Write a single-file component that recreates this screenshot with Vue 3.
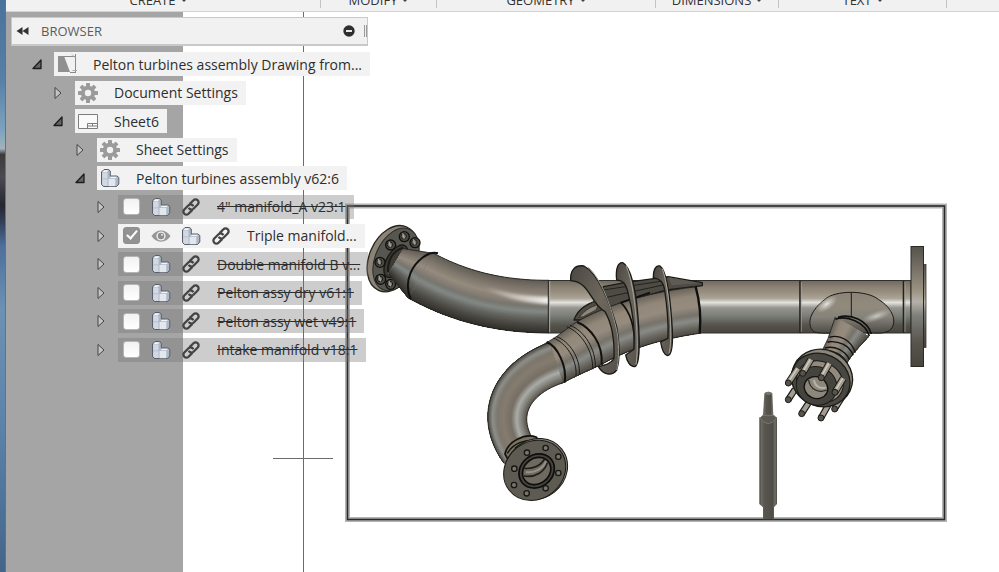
<script setup>
import { reactive } from 'vue'

const menus = ['CREATE', 'MODIFY', 'GEOMETRY', 'DIMENSIONS', 'TEXT']

const rows = reactive([
  { level: 0, open: true, icons: ['drawing'], label: 'Pelton turbines assembly Drawing from...' },
  { level: 1, open: false, icons: ['gear'], label: 'Document Settings' },
  { level: 1, open: true, icons: ['sheet'], label: 'Sheet6' },
  { level: 2, open: false, icons: ['gear'], label: 'Sheet Settings' },
  { level: 2, open: true, icons: ['part'], label: 'Pelton turbines assembly v62:6' },
  { level: 3, open: false, check: true, shown: false, icons: ['part', 'chain'], label: '4" manifold_A v23:1' },
  { level: 3, open: false, check: true, shown: true, icons: ['eye', 'part', 'chain'], label: 'Triple manifold...' },
  { level: 3, open: false, check: true, shown: false, icons: ['part', 'chain'], label: 'Double manifold B v...' },
  { level: 3, open: false, check: true, shown: false, icons: ['part', 'chain'], label: 'Pelton assy dry v61:1' },
  { level: 3, open: false, check: true, shown: false, icons: ['part', 'chain'], label: 'Pelton assy wet v49:1' },
  { level: 3, open: false, check: true, shown: false, icons: ['part', 'chain'], label: 'Intake manifold v18:1' }
])

// Steel shading across a tube, from one wall to the other.
const elbow = [
  [0, 96, 92, 84], [0.15, 124, 116, 106], [0.32, 150, 140, 127], [0.42, 134, 127, 117],
  [0.5, 118, 118, 112], [0.6, 132, 137, 133], [0.7, 104, 106, 101], [0.84, 76, 74, 68], [1, 48, 46, 42]
]
const tan = [
  [0, 104, 98, 88], [0.2, 146, 136, 122], [0.42, 150, 140, 127], [0.6, 118, 114, 106],
  [0.72, 138, 140, 136], [0.85, 108, 106, 99], [1, 76, 73, 66]
]
// Runs from the inner wall of the bend to its outer wall.
const bend = [
  [0, 84, 81, 74], [0.12, 128, 126, 119], [0.26, 170, 172, 167], [0.4, 118, 111, 101],
  [0.6, 134, 124, 111], [0.75, 124, 118, 108], [0.88, 142, 143, 138], [1, 74, 71, 64]
]

function shade(stops, u) {
  let i = 1
  while (i < stops.length - 1 && stops[i][0] < u) i++
  const a = stops[i - 1]
  const b = stops[i]
  const k = (u - a[0]) / (b[0] - a[0])
  return `rgb(${[1, 2, 3].map(c => Math.round(a[c] + (b[c] - a[c]) * k)).join(',')})`
}

// Splits a tube that follows a cubic curve into strips, one shade each.
// Every strip reaches to the far wall, so that the next one paints over it.
function tube([x0, y0, x1, y1, x2, y2, x3, y3], r0, r1, stops, count = 40) {
  const spine = []
  for (let i = 0; i <= 24; i++) {
    const t = i / 24
    const s = 1 - t
    const x = s * s * s * x0 + 3 * s * s * t * x1 + 3 * s * t * t * x2 + t * t * t * x3
    const y = s * s * s * y0 + 3 * s * s * t * y1 + 3 * s * t * t * y2 + t * t * t * y3
    const dx = s * s * (x1 - x0) + 2 * s * t * (x2 - x1) + t * t * (x3 - x2)
    const dy = s * s * (y1 - y0) + 2 * s * t * (y2 - y1) + t * t * (y3 - y2)
    const n = Math.hypot(dx, dy)
    const r = r0 + (r1 - r0) * t
    spine.push([x, y, (-dy / n) * r, (dx / n) * r])
  }
  const side = k => spine.map(p => `${(p[0] + p[2] * k).toFixed(1)},${(p[1] + p[3] * k).toFixed(1)}`)
  const far = side(1).reverse()
  const strips = []
  for (let i = 0; i < count; i++) {
    const a = (i / count) * 2 - 1
    strips.push({ points: [...side(a), ...far].join(' '), color: shade(stops, (i + 0.5) / count) })
  }
  return { strips, edges: [side(-1).join(' '), side(1).join(' ')] }
}

const line = (a, b, c, d) => [a, b, a + (c - a) / 3, b + (d - b) / 3, a + (c - a) * 2 / 3, b + (d - b) * 2 / 3, c, d]

const inletTubes = [
  tube(line(138, 184, 213, 227), 44, 77, elbow),
  tube([213, 227, 320, 285, 440, 320, 597, 320], 77, 79, elbow)
]
const branchTubes = [
  tube([148, 309, 230, 262, 350, 225, 475, 210], 74, 70, tan),
  tube(line(78, 350, 148, 309), 66, 74, tan),
  tube(line(34, 374, 78, 350), 64, 66, tan)
]
const bendTubes = [
  tube([258, 128, 132, 172, 66, 280, 148, 398], 64, 56, bend)
]
const nozzleTubes = [
  tube(line(305, 395, 332, 348), 40, 44, tan),
  tube(line(332, 348, 366, 290), 44, 58, tan)
]

const inletBolts = [[163, 110], [195, 128], [122, 135], [90, 187], [92, 238], [122, 253]]
const outletHoles = [[227, 384], [265, 410], [265, 459], [227, 505], [170, 520], [132, 495], [133, 446], [171, 398]]
const backStuds = [[195, 478, 175, 509], [235, 520, 215, 551], [295, 525, 273, 564], [343, 490, 314, 537]]
const frontStuds = [[204, 415, 175, 459], [243, 388, 218, 430], [298, 400, 274, 443], [340, 445, 315, 487]]
</script>

<template>
  <div class="window">
    <svg class="symbols" aria-hidden="true">
      <symbol id="drawing" viewBox="0 0 20 20">
        <path d="M1 2h6l6 16H1z" fill="#8f9092" />
        <path d="M7 2.500h12M18.500 0v19M13 18.500h6" fill="none" stroke="#8a8a8a" />
        <path d="M15 .5l4 4M15.500 16.500h5" stroke="#aaa" fill="none" />
      </symbol>
      <symbol id="gear" viewBox="0 0 20 20">
        <g fill="#9b9b9b">
          <rect v-for="n in 8" :key="n" x="8" y="0" width="4" height="6" rx=".6" :transform="`rotate(${n * 45} 10 10)`" />
        </g>
        <circle cx="10" cy="10" r="5.200" fill="none" stroke="#9b9b9b" stroke-width="4" />
      </symbol>
      <symbol id="sheet" viewBox="0 0 20 20">
        <path d="M.5 3.500h19v14H.5z" fill="#fafafa" stroke="#7d7d7d" />
        <path d="M9.500 17.500v-5h10M9.500 15h10M14.500 13v2" fill="none" stroke="#7d7d7d" />
      </symbol>
      <symbol id="part" viewBox="0 0 20 20">
        <path d="M1.500 4l2.500-2.500h4.500l1.800 1.500v5h6.700l1.800 1.500v6.500l-2.300 2.500H3.500l-2-2z" fill="#aeb7c6" stroke="#59606a" stroke-linejoin="round" />
        <path d="M2.200 4.200l2-2h4l-1.200 2z" fill="#f2f4f8" />
        <path d="M2.200 4.800h5.300v5.700H2.200zM2.200 11.300h5.300V18H4l-1.800-1.800z" fill="#d3d9e4" />
        <path d="M8.500 11h6.800v7.200H8.500z" fill="#e3e7ee" />
        <path d="M9.500 10.300l1.500-1.600h6l-1.500 1.600z" fill="#f2f4f8" />
      </symbol>
      <symbol id="chain" viewBox="0 0 20 20">
        <g fill="none" stroke="#444" stroke-width="2.300" transform="rotate(-45 10 10)">
          <path d="M9 13H3.500a3 3 0 0 1 0-6h6a3 3 0 0 1 2.700 4" />
          <path d="M11 7h5.500a3 3 0 0 1 0 6h-6a3 3 0 0 1-2.700-4" />
        </g>
      </symbol>
      <symbol id="eye" viewBox="0 0 20 20">
        <path d="M.5 10C5 2.500 15 2.500 19.500 10 15 17.500 5 17.500.5 10z" fill="#979797" />
        <circle cx="10" cy="10" r="4.600" fill="#eee" />
        <circle cx="10" cy="10" r="3.200" fill="#8c8c8c" />
        <circle cx="11" cy="8.800" r="1.100" fill="#ddd" />
      </symbol>
    </svg>

    <div class="wallpaper"></div>

    <div class="app">
      <nav class="toolbar">
        <div v-for="m in menus" :key="m" class="group">
          <button type="button">{{ m }}<span class="caret"></span></button>
        </div>
        <div class="group"></div>
      </nav>

      <main class="workspace">
        <div class="mat"></div>

        <svg class="canvas" viewBox="6 12 993 560" role="img" aria-label="Pelton turbine manifold">
          <defs>
            <linearGradient id="pipe" x1="0" y1="0" x2="0" y2="1">
              <stop offset="0" stop-color="#6e695f" />
              <stop offset=".12" stop-color="#8a8173" />
              <stop offset=".24" stop-color="#9a9182" />
              <stop offset=".34" stop-color="#aaa498" />
              <stop offset=".42" stop-color="#e4e2dd" />
              <stop offset=".52" stop-color="#96958f" />
              <stop offset=".68" stop-color="#7a7c77" />
              <stop offset=".85" stop-color="#55534c" />
              <stop offset="1" stop-color="#47443d" />
            </linearGradient>
            <linearGradient id="plate" x1="0" y1="0" x2="0" y2="1">
              <stop offset="0" stop-color="#56534a" />
              <stop offset=".2" stop-color="#79736a" />
              <stop offset=".36" stop-color="#9a917f" />
              <stop offset=".46" stop-color="#b4b1a8" />
              <stop offset=".58" stop-color="#7c7e79" />
              <stop offset=".8" stop-color="#57554d" />
              <stop offset="1" stop-color="#47453e" />
            </linearGradient>
            <linearGradient id="blade" x1="0" y1="0" x2="1" y2="1">
              <stop offset="0" stop-color="#4a4741" />
              <stop offset=".45" stop-color="#6d675e" />
              <stop offset="1" stop-color="#55524b" />
            </linearGradient>
            <linearGradient id="rod" x1="0" y1="0" x2="1" y2="0">
              <stop offset="0" stop-color="#4a4842" />
              <stop offset=".12" stop-color="#6b6961" />
              <stop offset=".3" stop-color="#57554e" />
              <stop offset=".75" stop-color="#4f4d47" />
              <stop offset=".9" stop-color="#706e66" />
              <stop offset="1" stop-color="#4a4842" />
            </linearGradient>
            <linearGradient id="saddle" x1="0" y1="0" x2="0" y2="1">
              <stop offset="0" stop-color="#8b8477" />
              <stop offset=".35" stop-color="#918a7d" />
              <stop offset=".6" stop-color="#86837b" />
              <stop offset="1" stop-color="#4c4a44" />
            </linearGradient>
            <radialGradient id="shine">
              <stop offset="0" stop-color="#f0efec" stop-opacity=".9" />
              <stop offset="1" stop-color="#d0cec8" stop-opacity="0" />
            </radialGradient>
            <linearGradient id="streak" x1="0" y1="0" x2="1" y2="0">
              <stop offset="0" stop-color="#fff" stop-opacity="0" />
              <stop offset=".5" stop-color="#f2f0ec" stop-opacity=".6" />
              <stop offset="1" stop-color="#fff" />
            </linearGradient>
            <filter id="soft" x="-10%" y="-60%" width="120%" height="220%">
              <feGaussianBlur stdDeviation="4" />
            </filter>
            <clipPath id="elbowEnd">
              <path d="M350 160h246v240H350z" />
            </clipPath>
          </defs>

          <path d="M303.500 12v560M273 458.500h60" stroke="#6b6b6b" fill="none" />

          <rect x="347.500" y="206" width="597" height="313.500" fill="#fff" stroke="#b4b4b4" stroke-width="5" />
          <rect x="347.500" y="206" width="597" height="313.500" fill="none" stroke="#2b2b2b" stroke-width="1.600" />

          <!-- header pipe and end flange -->
          <rect x="549" y="280.500" width="362" height="52.500" fill="url(#pipe)" stroke="#33312c" />
          <path d="M800 281v52M903.500 281v52" stroke="#24221f" stroke-width="1.600" />
          <path d="M801.300 282v50M905 282v50" stroke="#aaa79e" stroke-width=".7" />
          <rect x="922" y="264.500" width="4" height="83" fill="url(#plate)" stroke="#3a3833" stroke-width=".8" />
          <rect x="911" y="246.500" width="12.500" height="120" fill="url(#plate)" stroke="#2c2a26" />

          <!-- inlet elbow -->
          <g transform="translate(350 200) scale(.3333)" stroke-linejoin="round">
            <ellipse cx="128" cy="176" rx="70" ry="104" fill="#8b8476" stroke="#25231f" stroke-width="4" transform="rotate(24 128 176)" />
            <ellipse cx="138" cy="178" rx="62" ry="99" fill="#565750" stroke="#2b2a26" stroke-width="3" transform="rotate(24 138 178)" />
            <ellipse cx="138" cy="184" rx="28" ry="54" fill="#3d3b36" stroke="#191815" stroke-width="4" transform="rotate(30 138 184)" />
            <g v-for="b in inletBolts" :key="b.join()">
              <circle :cx="b[0]" :cy="b[1]" r="15" fill="#4c4a43" stroke="#11100e" stroke-width="4" />
              <circle :cx="b[0] - 2" :cy="b[1] - 1" r="8" fill="#77746a" stroke="#1b1a17" stroke-width="3" />
              <path :d="`M${b[0] - 5} ${b[1] - 10}l5 16`" stroke="#aaa698" stroke-width="4" />
            </g>
            <g v-for="(t, i) in inletTubes" :key="i">
              <polygon v-for="(s, j) in t.strips" :key="j" :points="s.points" :fill="s.color" />
              <polyline v-for="e in t.edges" :key="e" :points="e" fill="none" stroke="#25231f" stroke-width="3" />
            </g>
            <g clip-path="url(#elbowEnd)">
              <path d="M400 256C460 282 540 291 620 291V313C540 312 460 298 400 262z" fill="url(#streak)" filter="url(#soft)" />
            </g>
            <path d="M160 143C130 150 112 180 114 216" fill="none" stroke="#1b1a17" stroke-width="6" />
            <path d="M264 160C235 152 198 182 182 218 172 242 170 270 182 297" fill="none" stroke="#12110f" stroke-width="6" />
            <path d="M595 241v158" stroke="#262420" stroke-width="3" />
            <path d="M599 243v154" stroke="#ddd" stroke-width="2" />
          </g>

          <!-- branch with stiffening ribs -->
          <g transform="translate(540 240) scale(.3333)" stroke-linejoin="round">
            <path d="M102 240C112 210 140 192 170 182L190 140 258 127 385 110 487 128V137L380 150 240 190 130 240z" fill="#4e4b45" stroke="#1b1a17" stroke-width="4" />
            <path d="M118 232C135 210 152 200 175 194L168 210 130 230z" fill="#8d8679" stroke="#25231f" stroke-width="2" />
            <path d="M385 112L480 129 395 136z" fill="#5f5b53" />
            <path d="M190 150L375 122M200 172L378 133" stroke="#23211e" stroke-width="3" fill="none" />
            <g v-for="(t, i) in branchTubes" :key="i">
              <polygon v-for="(s, j) in t.strips" :key="j" :points="s.points" :fill="s.color" />
              <polyline v-for="e in t.edges" :key="e" :points="e" fill="none" stroke="#25231f" stroke-width="3" />
            </g>
            <path d="M467 140C478 180 484 230 479 279" fill="none" stroke="#100f0d" stroke-width="7" />
            <path d="M111 246C150 262 190 310 185 374" fill="none" stroke="#12110f" stroke-width="6" />
            <path d="M80 260C122 276 160 330 158 388M90 256C132 272 168 325 166 384" fill="none" stroke="#1b1a17" stroke-width="3" />
            <path d="M40 294C78 308 112 358 108 408M50 290C88 304 122 354 118 404" fill="none" stroke="#1b1a17" stroke-width="3" />
            <path d="M330 158L243 188C270 215 285 260 284 322" fill="none" stroke="#100f0d" stroke-width="5" />
            <path d="M92 122C90 90 105 74 132 78 175 100 210 190 230 260 240 320 240 360 230 390 215 410 190 405 175 380 195 375 215 370 222 355 224 300 215 250 195 215 150 190 150 125 92 122z" fill="url(#blade)" stroke="#1b1a17" stroke-width="4" />
            <path d="M145 82C185 120 215 200 232 280 238 330 236 360 230 390" fill="none" stroke="#9b978c" stroke-width="3" />
            <path d="M230 120C226 85 235 66 248 68 272 80 288 150 294 230 300 310 298 375 285 380 270 382 260 362 257 345L282 328C286 270 278 210 262 150 256 130 250 122 230 120z" fill="url(#blade)" stroke="#1b1a17" stroke-width="4" />
            <path d="M258 76C278 120 286 200 290 260 293 310 292 350 288 374" fill="none" stroke="#aaa69b" stroke-width="3" />
            <path d="M340 113C340 85 350 75 360 78 380 92 390 170 395 240 400 300 398 345 383 347 370 345 365 325 362 306L384 295C386 240 380 190 374 150 370 125 360 117 340 113z" fill="url(#blade)" stroke="#1b1a17" stroke-width="4" />
            <path d="M367 86C383 130 390 210 392 260 393 300 391 325 387 340" fill="none" stroke="#aaa69b" stroke-width="3" />
          </g>

          <!-- outlet bend -->
          <g transform="translate(470 320) scale(.3333)" stroke-linejoin="round">
            <g v-for="(t, i) in bendTubes" :key="i">
              <polygon v-for="(s, j) in t.strips" :key="j" :points="s.points" :fill="s.color" />
              <polyline v-for="e in t.edges" :key="e" :points="e" fill="none" stroke="#25231f" stroke-width="3" />
            </g>
            <path d="M230 66C262 78 292 138 284 188" fill="none" stroke="#12110f" stroke-width="6" />
            <path d="M105 402C112 365 165 338 200 352L206 372 120 430z" fill="#78725f" stroke="#12110f" stroke-width="5" />
            <path d="M112 400C130 370 165 358 200 362M135 385C150 370 170 366 192 368" fill="none" stroke="#12110f" stroke-width="4" />
            <ellipse cx="199" cy="447" rx="97" ry="88" fill="#88837a" stroke="#1b1a17" stroke-width="3" transform="rotate(-38 199 447)" />
            <ellipse cx="194" cy="451" rx="97" ry="86" fill="#5d5b52" stroke="#1b1a17" stroke-width="3" transform="rotate(-38 194 451)" />
            <ellipse cx="200" cy="453" rx="56" ry="48" fill="#45433d" stroke="#0f0e0c" stroke-width="5" transform="rotate(-38 200 453)" />
            <ellipse cx="200" cy="453" rx="45" ry="38" fill="#6f6a60" stroke="#0f0e0c" stroke-width="5" transform="rotate(-38 200 453)" />
            <path d="M163 445C190 448 215 435 224 416M162 468C195 474 225 455 232 428" fill="none" stroke="#1f1d1a" stroke-width="5" />
            <path d="M168 456C195 460 218 446 228 424" fill="none" stroke="#96928a" stroke-width="6" />
            <circle v-for="h in outletHoles" :key="h.join()" :cx="h[0]" :cy="h[1]" r="8" fill="#77756c" stroke="#181714" stroke-width="4" />
          </g>

          <!-- saddle, nozzle and needle rod -->
          <g transform="translate(730 230) scale(.3333)" stroke-linejoin="round">
            <path d="M252 306C225 280 245 238 285 208 315 180 410 180 445 208 490 235 505 280 478 302 460 312 440 309 420 309L300 309C285 310 265 310 252 306z" fill="url(#saddle)" stroke="#1b1a17" stroke-width="3" />
            <ellipse cx="290" cy="222" rx="38" ry="18" fill="url(#shine)" transform="rotate(-35 290 222)" />
            <ellipse cx="440" cy="258" rx="50" ry="15" fill="url(#shine)" opacity=".7" transform="rotate(-20 440 258)" />
            <path d="M364 187v74" stroke="#1b1a17" stroke-width="3" />
            <g v-for="(t, i) in nozzleTubes" :key="i">
              <polygon v-for="(s, j) in t.strips" :key="j" :points="s.points" :fill="s.color" />
              <polyline v-for="e in t.edges" :key="e" :points="e" fill="none" stroke="#25231f" stroke-width="3" />
            </g>
            <path d="M316 268C350 255 405 275 418 318M324 262C362 250 412 270 424 312" fill="none" stroke="#12110f" stroke-width="5" />
            <path d="M298 322C330 312 365 332 376 368M292 336C325 330 358 346 370 376M284 354C315 346 345 362 358 388M278 364C310 358 338 374 350 398" fill="none" stroke="#12110f" stroke-width="4" />
            <ellipse cx="277" cy="443" rx="92" ry="84" fill="#8a8578" stroke="#1b1a17" stroke-width="4" transform="rotate(25 277 443)" />
            <g v-for="s in backStuds" :key="s.join()">
              <path :d="`M${s[0]} ${s[1]}L${s[2]} ${s[3]}`" stroke="#1b1a17" stroke-width="20" />
              <path :d="`M${s[0]} ${s[1]}L${s[2]} ${s[3]}`" stroke="#a39d90" stroke-width="13" />
              <circle :cx="s[2]" :cy="s[3]" r="9" fill="#57544c" stroke="#1b1a17" stroke-width="3" />
            </g>
            <ellipse cx="272" cy="450" rx="90" ry="78" fill="#494741" stroke="#1b1a17" stroke-width="4" transform="rotate(25 272 450)" />
            <ellipse cx="270" cy="455" rx="72" ry="60" fill="#918a7d" stroke="#1b1a17" stroke-width="3" transform="rotate(25 270 455)" />
            <ellipse cx="260" cy="468" rx="62" ry="57" fill="#45433d" stroke="#1b1a17" stroke-width="3" transform="rotate(25 260 468)" />
            <ellipse cx="258" cy="473" rx="36" ry="32" fill="#8d877b" stroke="#12110f" stroke-width="4" transform="rotate(25 258 473)" />
            <path d="M236 450C240 480 268 490 290 480" fill="none" stroke="#2b2925" stroke-width="4" />
            <path d="M252 450C255 470 272 478 288 472" fill="none" stroke="#b5b2aa" stroke-width="6" />
            <g v-for="s in frontStuds" :key="s.join()">
              <path :d="`M${s[0]} ${s[1]}L${s[2]} ${s[3]}`" stroke="#1b1a17" stroke-width="21" />
              <path :d="`M${s[0]} ${s[1]}L${s[2]} ${s[3]}`" stroke="#a39d90" stroke-width="15" />
              <path :d="`M${s[0] - 2} ${s[1]}L${s[2] - 2} ${s[3]}`" stroke="#d3cfc4" stroke-width="4" />
              <circle :cx="s[2]" :cy="s[3]" r="9" fill="#57544c" stroke="#1b1a17" stroke-width="3" />
            </g>
            <path d="M103 490Q115 480 127 490L130 560H99z" fill="url(#rod)" />
            <path d="M88 562H141V822L132 832V868H99V832L88 822z" fill="url(#rod)" />
            <path d="M90 564Q115 598 140 564L132 556H98z" fill="#5b5951" stroke="#8a8779" stroke-width="2" />
            <ellipse cx="115" cy="490" rx="10" ry="5" fill="#77756c" />
          </g>
        </svg>

        <aside class="browser">
          <header class="title">
            <button type="button" class="collapse" aria-label="Collapse browser">
              <svg viewBox="0 0 12 8"><path d="M6 0v8L0 4zM12 0v8L6 4z" fill="#333" /></svg>
            </button>
            <h1>BROWSER</h1>
            <button type="button" class="minus" aria-label="Minimize browser">
              <svg viewBox="0 0 12 12"><circle cx="6" cy="6" r="5.700" fill="#2f2f2f" /><path d="M3 6h6" stroke="#fff" stroke-width="1.800" /></svg>
            </button>
            <span class="grip"></span>
          </header>

          <ul class="tree">
            <li v-for="row in rows" :key="row.label" :class="'level-' + row.level">
              <button type="button" class="twisty" :aria-expanded="row.open" :aria-label="'Toggle ' + row.label">
                <svg viewBox="0 0 12 12">
                  <path v-if="row.open" d="M10 2v8.500H2z" fill="#666" stroke="#1c1c1c" stroke-width="1.300" stroke-linejoin="round" />
                  <path v-else d="M3 .5L9 6l-6 5.500z" fill="#c4c4c4" stroke="#444" stroke-linejoin="round" />
                </svg>
              </button>
              <label class="node" :class="{ off: row.check && !row.shown }">
                <input v-if="row.check" v-model="row.shown" type="checkbox" />
                <svg v-for="icon in row.icons" :key="icon" class="icon"><use :href="'#' + icon" /></svg>
                <span class="name">{{ row.label }}</span>
              </label>
            </li>
          </ul>
        </aside>
      </main>
    </div>
  </div>
</template>

<style>
body {
  margin: 0;
}
</style>

<style scoped>
.window {
  display: grid;
  grid-template-columns: 6px minmax(0, 1fr);
  height: 100vh;
  overflow: hidden;
  background: #fff;
  color: #2e2e2e;
  font-family: "Open Sans", "Noto Sans", sans-serif;
  font-size: 14px;
}

.symbols {
  position: absolute;
  width: 0;
  height: 0;
}

.wallpaper {
  background: linear-gradient(#4a719b 0, #5680a6 14%, #7fa4bf 23%, #a3b3b8 26%, #3d3a3b 27%, #4a4a50 31%, #26282f 36%, #35415a 39%, #4c6f9c 43%, #6d91b4 54%, #5b82a8 75%, #44658a 100%);
  border-right: 1px solid #60738a;
  box-sizing: border-box;
}

.app {
  display: flex;
  flex-direction: column;
}

.toolbar {
  display: grid;
  grid-template-columns: 315fr 116fr 219fr 123fr 168fr 52fr;
  height: 11px;
  overflow: hidden;
  background: #f1f1f1;
  border-bottom: 1px solid #d2d2d2;
}

.group {
  display: flex;
  justify-content: center;
  align-items: flex-end;
  height: 8px;
  border-right: 1px solid #c4c4c4;
}

.group:first-child {
  padding-right: 10px;
}

.group:last-child {
  border-right: 0;
}

.toolbar button {
  display: flex;
  align-items: center;
  gap: 5px;
  padding: 0;
  border: 0;
  background: none;
  color: #333;
  font: 13px/16px "Open Sans", sans-serif;
}

.caret {
  border: 3px solid transparent;
  border-top-color: #444;
  border-bottom: 0;
}

.workspace {
  position: relative;
  flex: 1;
  overflow: hidden;
}

.mat {
  width: 177px;
  height: 100%;
  background: #a5a5a5;
}

.canvas {
  position: absolute;
  top: 0;
  left: 0;
  width: 993px;
  height: 560px;
}

.browser {
  position: absolute;
  top: 5px;
  left: 5px;
  width: 357px;
}

.title {
  display: flex;
  align-items: center;
  box-sizing: border-box;
  height: 29px;
  padding-left: 4px;
  background: #f1f1f1;
  border: 1px solid #c9c9c9;
  border-bottom-width: 2px;
}

.title h1 {
  flex: 1;
  margin: 0 0 0 12px;
  color: #5c5c5c;
  font-size: 13px;
  font-weight: 400;
}

.title button,
.twisty {
  display: flex;
  padding: 0;
  border: 0;
  background: none;
}

.collapse svg {
  width: 13px;
  height: 8px;
}

.minus svg {
  width: 12px;
  height: 12px;
}

.grip {
  width: 1px;
  height: 12px;
  margin-left: 9px;
  border: solid #999;
  border-width: 0 1px;
}

.tree {
  display: grid;
  align-content: space-between;
  height: 310px;
  margin: 6px 0 0;
  padding: 0;
  list-style: none;
}

.tree li {
  display: flex;
  align-items: center;
  gap: 11px;
}

.level-0 {
  padding-left: 20px;
}

.level-1 {
  padding-left: 41px;
}

.level-2 {
  padding-left: 63px;
}

.level-3 {
  padding-left: 84px;
}

.twisty svg {
  width: 12px;
  height: 12px;
}

.node {
  display: flex;
  align-items: center;
  box-sizing: border-box;
  height: 24px;
  padding: 0 8px 0 3px;
  background: #f2f2f2;
  white-space: nowrap;
}

.node.off {
  background: rgba(116, 116, 116, 0.36);
}

.icon {
  width: 20px;
  height: 20px;
}

.level-3 .icon {
  margin-left: 10px;
}

.name {
  margin-left: 16px;
}

.off .name {
  text-decoration: line-through;
}

.node input {
  appearance: none;
  box-sizing: border-box;
  width: 17px;
  height: 17px;
  margin: 0 1px 0 2px;
  border: 1px solid #b5b5b5;
  border-radius: 3px;
  background: linear-gradient(#f2f2f2, #fff);
}

.node input:checked {
  border-color: #8e8e8e;
  background: #929292;
}

.node input:checked::before {
  content: "";
  display: block;
  width: 4px;
  height: 9px;
  margin: 0 0 0 5px;
  border: solid #fff;
  border-width: 0 2px 2px 0;
  transform: rotate(40deg);
}
</style>
